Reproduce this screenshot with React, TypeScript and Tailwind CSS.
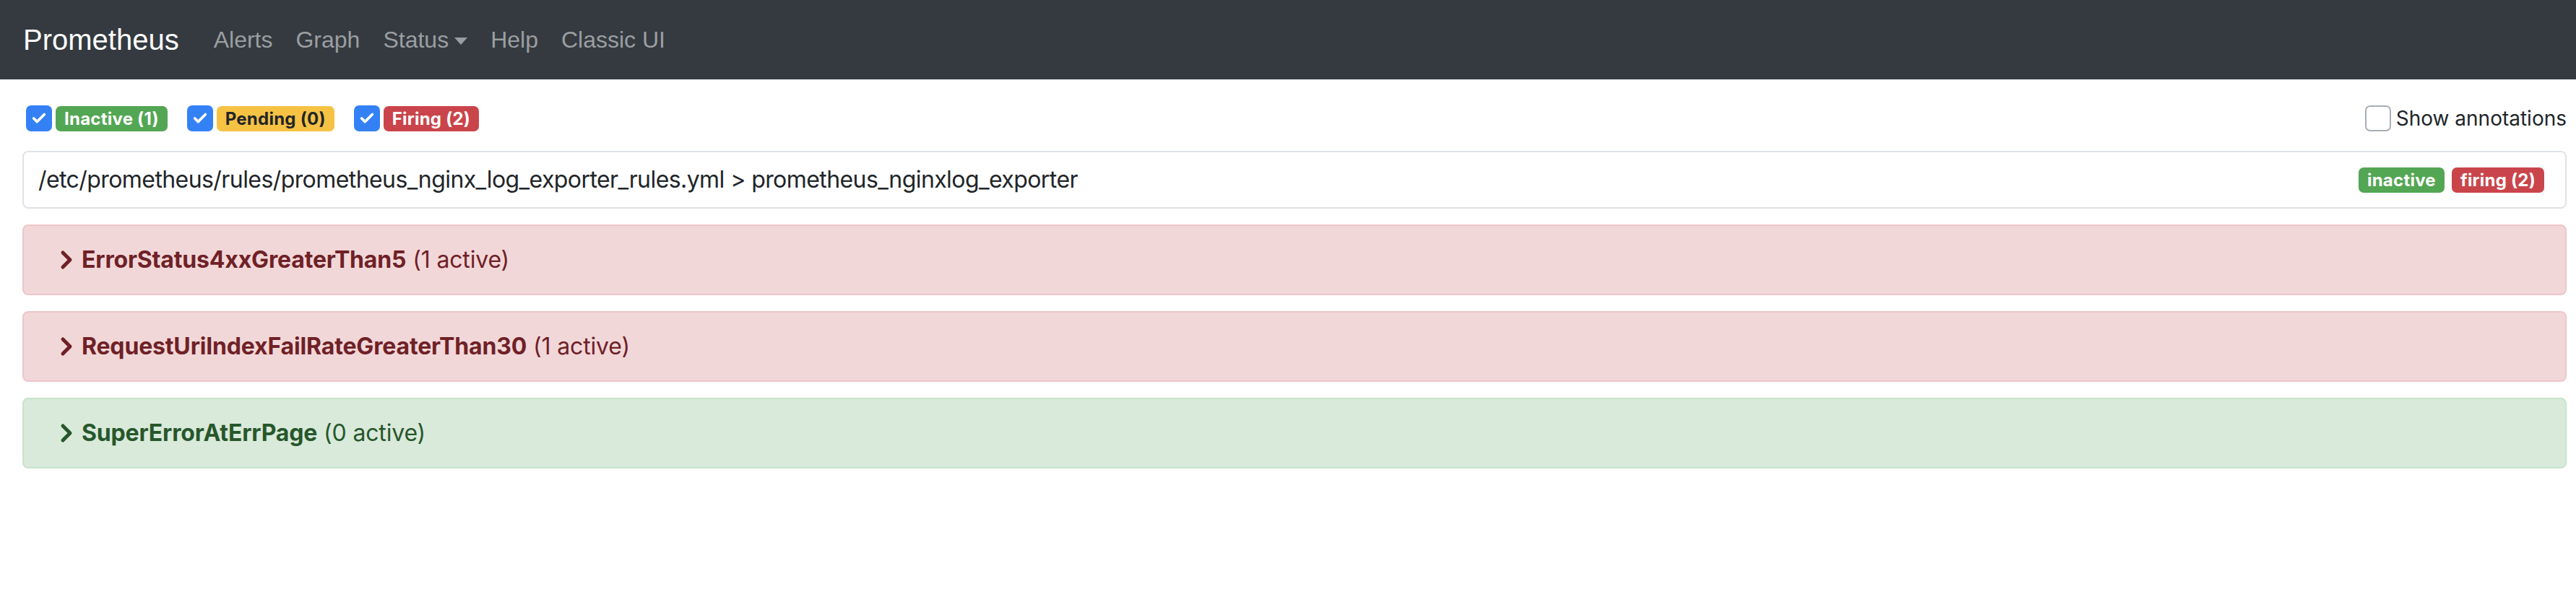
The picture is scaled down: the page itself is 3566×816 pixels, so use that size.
import { Check } from "lucide-react";

type Filter = { label: string; badge: string };
type Alert = { name: string; active: number; tone: "danger" | "success" };

const FILTERS: Filter[] = [
  { label: "Inactive (1)", badge: "bg-[#53a653] text-white" },
  { label: "Pending (0)", badge: "bg-[#f6c244] text-[#212529]" },
  { label: "Firing (2)", badge: "bg-[#ca454b] text-white" },
];

const NAV = ["Alerts", "Graph", "Status", "Help", "Classic UI"];

const ALERTS: Alert[] = [
  { name: "ErrorStatus4xxGreaterThan5", active: 1, tone: "danger" },
  { name: "RequestUriIndexFailRateGreaterThan30", active: 1, tone: "danger" },
  { name: "SuperErrorAtErrPage", active: 0, tone: "success" },
];

function Chevron() {
  return (
    <svg width="18" height="28" viewBox="0 0 18 28" className="flex-none" aria-hidden>
      <polyline points="4,4 14,14 4,24" fill="none" stroke="currentColor" strokeWidth="5" strokeLinecap="round" strokeLinejoin="round" />
    </svg>
  );
}

function Box({ checked }: { checked: boolean }) {
  return checked ? (
    <span className="flex h-[36px] w-[36px] flex-none items-center justify-center rounded-[7px] bg-[#3381f5]">
      <Check className="h-[22px] w-[22px] text-white" strokeWidth={4} />
    </span>
  ) : (
    <span className="h-[36px] w-[36px] flex-none rounded-[7px] border-2 border-[#a9aeb6] bg-white" />
  );
}

export default function App() {
  return (
    <div className="min-h-screen bg-white font-['Inter','Liberation_Sans',sans-serif] text-[#212529]">
      <nav className="flex h-[110px] items-center bg-[#343a40] px-[32px] font-['Liberation_Sans','Inter',sans-serif]">
        <span className="mr-[32px] text-[40px] leading-[60px] text-white">Prometheus</span>
        <ul className="flex items-center">
          {NAV.map((item) => (
            <li key={item} className="flex items-center px-[16px] text-[32px] leading-[48px] text-[#9b9ea1]">
              {item}
              {item === "Status" && (
                <span className="ml-[8px] mt-[4px] h-0 w-0 border-x-[9px] border-t-[10px] border-x-transparent border-t-[#9b9ea1]" />
              )}
            </li>
          ))}
        </ul>
      </nav>

      <main className="pl-[31px] pr-[13px] pt-[36px]">
        <div className="flex h-[36px] items-center justify-between">
          <div className="flex items-center gap-[27px] pl-[5px]">
            {FILTERS.map((f) => (
              <div key={f.label} className="flex items-center gap-[5px]">
                <Box checked />
                <span className={`rounded-[7px] px-[12px] text-[24px] leading-[35px] font-bold tracking-[0.01em] ${f.badge}`}>{f.label}</span>
              </div>
            ))}
          </div>
          <label className="flex items-center gap-[7px]">
            <Box checked={false} />
            <span className="text-[28px] leading-[36px]">Show annotations</span>
          </label>
        </div>

        <div className="mt-[27px] flex h-[80px] items-center justify-between rounded-[8px] border-2 border-[#dfe3e7] pl-[20px] pr-[29px]">
          <span className="text-[32px] leading-[48px] tracking-[-0.018em]">
            /etc/prometheus/rules/prometheus_nginx_log_exporter_rules.yml &gt; prometheus_nginxlog_exporter
          </span>
          <div className="flex gap-[10px]">
            <span className="rounded-[7px] bg-[#53a653] px-[12px] text-[24px] leading-[35px] font-bold tracking-[0.01em] text-white">inactive</span>
            <span className="rounded-[7px] bg-[#ca454b] px-[12px] text-[24px] leading-[35px] font-bold tracking-[0.01em] text-white">firing (2)</span>
          </div>
        </div>

        <div className="mt-[22px] flex flex-col gap-[22px]">
          {ALERTS.map((a) => (
            <div
              key={a.name}
              className={
                a.tone === "danger"
                  ? "flex h-[98px] items-center gap-[12px] rounded-[8px] border-2 border-[#edc6ca] bg-[#f2d7d9] pl-[50px] text-[32px] tracking-[-0.005em] text-[#6f2126]"
                  : "flex h-[98px] items-center gap-[12px] rounded-[8px] border-2 border-[#c8e3cc] bg-[#d9eadb] pl-[50px] text-[32px] tracking-[-0.005em] text-[#27572b]"
              }
            >
              <Chevron />
              <span>
                <strong className="font-bold">{a.name}</strong> ({a.active} active)
              </span>
            </div>
          ))}
        </div>
      </main>
    </div>
  );
}
